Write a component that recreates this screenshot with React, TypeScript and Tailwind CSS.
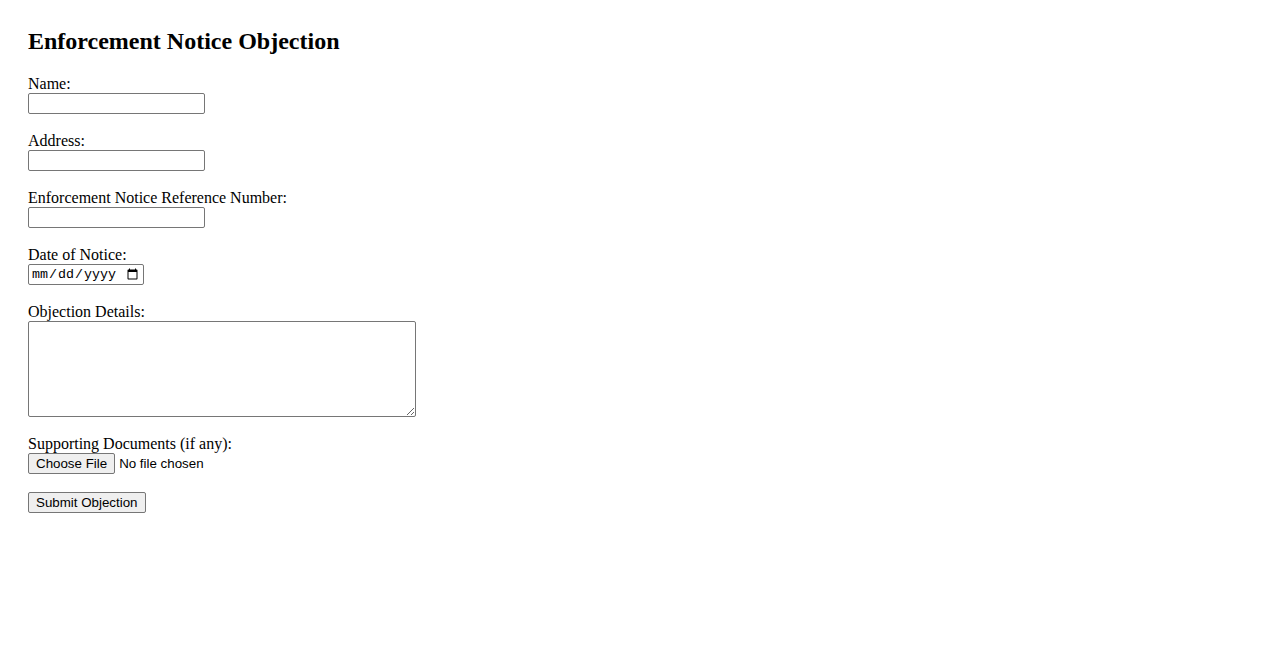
export default function App() {
  const label = "block text-[16px] leading-[19px] text-black";
  const field =
    "block h-[21px] w-[177px] rounded-[2px] border border-[#767676] bg-white px-[2px] font-['Liberation_Sans',Arial,sans-serif] text-[13.33px]";
  const btn =
    "block h-[21px] rounded-[2px] border border-[#767676] bg-[#efefef] px-[7px] font-['Liberation_Sans',Arial,sans-serif] text-[13.33px] leading-[15px] text-black hover:bg-[#e5e5e5]";

  return (
    <div className="min-h-screen bg-white pl-[28px] pt-[27px] font-['Liberation_Serif','Times_New_Roman',serif] text-black">
      <h2 className="mb-[19px] text-[24px] font-bold leading-[28px]">Enforcement Notice Objection</h2>
      <form onSubmit={(e) => e.preventDefault()}>
        <div className="mb-[17px]">
          <label htmlFor="name" className={label}>Name:</label>
          <input id="name" type="text" className={field} />
        </div>
        <div className="mb-[17px]">
          <label htmlFor="address" className={label}>Address:</label>
          <input id="address" type="text" className={field} />
        </div>
        <div className="mb-[17px]">
          <label htmlFor="ref" className={label}>Enforcement Notice Reference Number:</label>
          <input id="ref" type="text" className={field} />
        </div>
        <div className="mb-[17px]">
          <label htmlFor="date" className={label}>Date of Notice:</label>
          <input
            id="date"
            type="date"
            className="block h-[21px] w-[116px] rounded-[2px] border border-[#767676] bg-white pl-[2px] pr-[2px] font-['Liberation_Mono','Courier_New',monospace] text-[13.33px]"
          />
        </div>
        <div className="mb-[17px]">
          <label htmlFor="details" className={label}>Objection Details:</label>
          <textarea
            id="details"
            className="block h-[96px] w-[388px] rounded-[2px] border border-[#767676] bg-white p-[2px] font-['Liberation_Mono','Courier_New',monospace] text-[13.33px]"
          />
        </div>
        <div className="mb-[18px]">
          <label htmlFor="docs" className={label}>Supporting Documents (if any):</label>
          <input
            id="docs"
            type="file"
            className="block h-[21px] font-['Liberation_Sans',Arial,sans-serif] text-[13.33px] leading-[15px] file:mr-[4px] file:h-[21px] file:rounded-[2px] file:border file:border-solid file:border-[#767676] file:bg-[#efefef] file:px-[7px] file:font-['Liberation_Sans',Arial,sans-serif] file:text-[13.33px] file:text-black"
          />
        </div>
        <button type="submit" className={btn}>Submit Objection</button>
      </form>
    </div>
  );
}
